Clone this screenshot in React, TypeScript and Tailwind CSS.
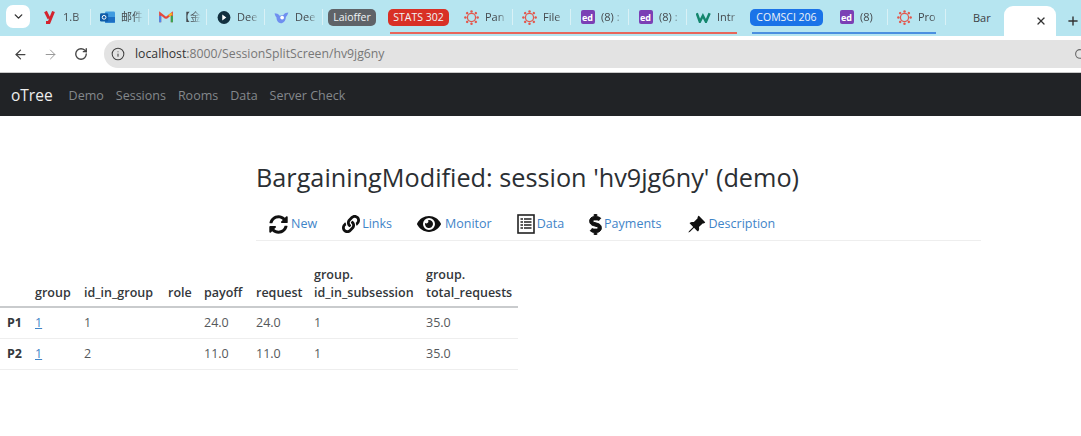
import { ArrowLeft, ArrowRight, ChevronDown, Info, Plus, RotateCw, Search, X } from 'lucide-react'
import type { ReactNode } from 'react'
import { BsPinAngleFill } from 'react-icons/bs'
import { FaDollarSign, FaEye, FaLink, FaSyncAlt } from 'react-icons/fa'

function CanvasIcon() {
  const dots = [0, 45, 90, 135, 180, 225, 270, 315]
  return (
    <svg width="15" height="15" viewBox="0 0 24 24">
      <circle cx="12" cy="12" r="6.5" fill="none" stroke="#e2574c" strokeWidth="2" />
      {dots.map((a) => (
        <circle key={a} cx="12" cy="2.200" r="2" fill="#e2574c" transform={`rotate(${a} 12 12)`} />
      ))}
    </svg>
  )
}

function EdIcon() {
  return (
    <div className="flex h-[14px] w-[14px] items-center justify-center rounded-[2px] bg-[#7b3fb5] text-[9px] font-bold leading-none text-white">
      ed
    </div>
  )
}

function YIcon() {
  return (
    <svg width="11" height="14" viewBox="0 0 22 28">
      <path d="M3 3l7 14M19 3l-9 22H4" fill="none" stroke="#d3232e" strokeWidth="6" />
    </svg>
  )
}

function OutlookIcon() {
  return (
    <svg width="15" height="14" viewBox="0 0 24 22">
      <rect x="8" y="2" width="16" height="18" rx="2" fill="#3f9be0" />
      <rect x="8" y="11" width="16" height="9" fill="#1c6fc4" />
      <rect x="0" y="5" width="13" height="13" rx="2" fill="#0f5ca8" />
      <circle cx="6.500" cy="11.500" r="3" fill="none" stroke="#fff" strokeWidth="1.600" />
    </svg>
  )
}

function GmailIcon() {
  return (
    <svg width="14" height="12" viewBox="0 0 24 20">
      <path d="M2 19V4l10 8" fill="none" stroke="#e5483b" strokeWidth="3.600" />
      <path d="M22 19V4L12 12" fill="none" stroke="#e5483b" strokeWidth="3.600" />
      <path d="M2 19V8" stroke="#4a88ee" strokeWidth="3.600" />
      <path d="M22 19V8" stroke="#33a853" strokeWidth="3.600" />
      <path d="M22 4l-5 4" stroke="#f7bc1c" strokeWidth="3.600" />
    </svg>
  )
}

function DarkHexIcon() {
  return (
    <svg width="14" height="15" viewBox="0 0 24 24">
      <circle cx="12" cy="12" r="11" fill="#12303f" />
      <path d="M9 7l7 5-7 5z" fill="#fff" />
    </svg>
  )
}

function WhaleIcon() {
  return (
    <svg width="15" height="13" viewBox="0 0 24 20">
      <path d="M1 3c3 0 6 1 8 4l6-1c2-3 5-4 8-4-1 3-2 5-4 7 0 6-4 10-8 10S4 15 4 10C3 8 1 6 1 3z" fill="#6f8ff0" />
      <circle cx="13" cy="10" r="3" fill="#fff" />
    </svg>
  )
}

function WIcon() {
  return (
    <svg width="15" height="11" viewBox="0 0 24 18">
      <path d="M1 2l5 14 5-10 5 10 6-14" fill="none" stroke="#14866d" strokeWidth="4" />
    </svg>
  )
}

function ListIcon() {
  return (
    <svg width="18" height="20" viewBox="0 0 18 20" fill="none" stroke="#222">
      <rect x="1" y="1" width="16" height="18" strokeWidth="1.600" />
      <path d="M3.500 5h11M3.500 8h11M3.500 11h11M3.500 14h11" strokeWidth="1.600" />
      <path d="M6.500 4v12" stroke="#fff" strokeWidth="1" />
    </svg>
  )
}

function Tab({ icon, label, last }: { icon?: ReactNode; label: string; last?: boolean }) {
  return (
    <div className="flex h-[24px] w-[58px] shrink-0 items-center">
      <div className="flex h-[16px] w-[57px] items-center gap-[6px] overflow-hidden pl-[9px]">
        <div className="flex w-[15px] shrink-0 justify-center">{icon}</div>
        <span className="w-[22px] shrink-0 overflow-hidden whitespace-nowrap text-[11px] text-[#45494d] [mask-image:linear-gradient(to_right,black_60%,transparent)]">
          {label}
        </span>
      </div>
      {!last && <div className="h-[16px] w-px shrink-0 bg-[#d9f1f6]" />}
    </div>
  )
}

function Pill({ label, color, width }: { label: string; color: string; width: string }) {
  return (
    <div className={`flex h-[17px] shrink-0 items-center justify-center rounded-[5px] text-[10.5px] text-[#f0f4f6] ${color} ${width}`}>
      {label}
    </div>
  )
}

function TabStrip() {
  return (
    <div className="flex h-[36px] items-start bg-[#b6e5f0] pt-[5px]">
      <div className="ml-[6px] flex h-[23px] w-[24px] shrink-0 items-center justify-center rounded-[7px] bg-white">
        <ChevronDown size={13} strokeWidth={2.6} className="text-[#333]" />
      </div>
      <div className="ml-[3px] flex">
        <Tab icon={<YIcon />} label="1.B" />
        <Tab icon={<OutlookIcon />} label="邮件" />
        <Tab icon={<GmailIcon />} label="【金" />
        <Tab icon={<DarkHexIcon />} label="Dee" />
        <Tab icon={<WhaleIcon />} label="Dee" />
      </div>
      <div className="mt-[4px] shrink-0 pl-[5px]">
        <Pill label="Laioffer" color="bg-[#5f6368]" width="w-[48px]" />
      </div>
      <div className="ml-[12px] flex h-[29px] shrink-0 items-start">
        <div className="flex h-[29px] w-[350px] flex-col">
          <div className="flex h-[27px] items-start">
            <div className="mt-[4px]">
              <Pill label="STATS 302" color="bg-[#d93025]" width="w-[61px]" />
            </div>
            <div className="ml-[6px] flex">
              <Tab icon={<CanvasIcon />} label="Pan" />
              <Tab icon={<CanvasIcon />} label="File" />
              <Tab icon={<EdIcon />} label="(8) :" />
              <Tab icon={<EdIcon />} label="(8) :" />
              <Tab icon={<WIcon />} label="Intr" last />
            </div>
          </div>
          <div className="ml-[2px] h-[2px] w-[347px] bg-[#e8655a]" />
        </div>
      </div>
      <div className="ml-[12px] flex h-[29px] w-[187px] shrink-0 flex-col">
        <div className="flex h-[27px] items-start">
          <div className="mt-[4px]">
            <Pill label="COMSCI 206" color="bg-[#1a73e8]" width="w-[73px]" />
          </div>
          <div className="ml-[7px] flex">
            <Tab icon={<EdIcon />} label="(8)" />
            <Tab icon={<CanvasIcon />} label="Pro" />
          </div>
        </div>
        <div className="ml-[2px] h-[2px] w-[184px] bg-[#4b8fe0]" />
      </div>
      <div className="ml-[36px] mt-[4px] w-[20px] shrink-0 text-[11px] leading-[17px] text-[#3c4043]">Bar</div>
      <div className="ml-[11px] mt-[1px] flex h-[30px] w-[52px] shrink-0 items-center justify-end self-start rounded-t-[9px] bg-white pr-[9px]">
        <X size={12} strokeWidth={2.6} className="text-[#333]" />
      </div>
      <Plus size={14} strokeWidth={2.4} className="ml-[10px] mt-[9px] shrink-0 text-[#333]" />
    </div>
  )
}

function Toolbar() {
  return (
    <div className="flex h-[37px] items-center border-b border-[#c9c9c9] bg-white pl-[13px]">
      <ArrowLeft size={15} strokeWidth={2} className="text-[#444]" />
      <ArrowRight size={15} strokeWidth={1.6} className="ml-[15px] text-[#999]" />
      <RotateCw size={14} strokeWidth={2.3} className="ml-[16px] text-[#444]" />
      <div className="ml-[16px] flex h-[28px] min-w-0 flex-1 items-center overflow-hidden rounded-l-full bg-[#e3e3e3] pl-[6px]">
        <Info size={14} strokeWidth={1.8} className="ml-[1px] shrink-0 text-[#444]" />
        <div className="ml-[10px] text-[12.25px] text-[#777]">
          <span className="text-[#333]">localhost</span>:8000/SessionSplitScreen/hv9jg6ny
        </div>
        <Search size={13} className="ml-auto mr-[-6px] shrink-0 text-[#666]" />
      </div>
    </div>
  )
}

function NavBar() {
  return (
    <nav className="flex h-[43px] items-center bg-[#212326] pl-[11px] pt-[3px]">
      <span className="text-[15.5px] text-[#eeeeee]">oTree</span>
      <div className="ml-[16px] flex gap-[12px] text-[12.5px] text-[#84888c]">
        <span>Demo</span>
        <span>Sessions</span>
        <span>Rooms</span>
        <span>Data</span>
        <span>Server Check</span>
      </div>
    </nav>
  )
}

const ACTIONS = [
  { label: 'New', icon: <FaSyncAlt size={19} />, gap: 'gap-[3px]' },
  { label: 'Links', icon: <FaLink size={18} />, gap: 'gap-[2px]' },
  { label: 'Monitor', icon: <FaEye size={24} />, gap: 'gap-[4px]' },
  { label: 'Data', icon: <ListIcon />, gap: 'gap-[2px]' },
  { label: 'Payments', icon: <FaDollarSign size={21} stroke="currentColor" strokeWidth={24} className="-mx-[4px]" />, gap: 'gap-[2px]' },
  { label: 'Description', icon: <BsPinAngleFill size={19} />, gap: 'gap-[3px]' },
]

function Header() {
  return (
    <div className="ml-[256px] mt-[43px] w-[725px]">
      <h1 className="text-[25.25px] leading-[36px] text-[#2b2f33]">BargainingModified: session 'hv9jg6ny' (demo)</h1>
      <div className="mt-[14px] flex h-[32px] items-start gap-[25px] border-b border-[#eeeeee] pl-[13px] pt-[3px]">
        {ACTIONS.map((a) => (
          <div key={a.label} className={`flex h-[24px] items-center text-[12.5px] text-[#3f84c8] ${a.gap}`}>
            <span className="text-[#111]">{a.icon}</span>
            <span>{a.label}</span>
          </div>
        ))}
      </div>
    </div>
  )
}

const HEAD = ['', 'group', 'id_in_group', 'role', 'payoff', 'request', 'group.\nid_in_subsession', 'group.\ntotal_requests']
const ROWS = [
  ['P1', '1', '1', '', '24.0', '24.0', '1', '35.0'],
  ['P2', '1', '2', '', '11.0', '11.0', '1', '35.0'],
]

function DataTable() {
  return (
    <table className="mt-[25px] w-[518px] table-fixed border-collapse text-[12.5px] text-[#55585b]">
      <colgroup>
        <col className="w-[30px]" />
        <col className="w-[49px]" />
        <col className="w-[84px]" />
        <col className="w-[36px]" />
        <col className="w-[52px]" />
        <col className="w-[58px]" />
        <col className="w-[112px]" />
        <col className="w-[97px]" />
      </colgroup>
      <thead>
        <tr className="border-b-2 border-[#c9cbcd]">
          {HEAD.map((h, i) => (
            <th key={i} className="whitespace-pre pb-[4px] pl-[5px] text-left align-bottom text-[12.5px] font-semibold leading-[18px] text-[#33373b]">
              {h}
            </th>
          ))}
        </tr>
      </thead>
      <tbody>
        {ROWS.map((row) => (
          <tr key={row[0]} className="h-[31px] border-b border-[#eeeeee]">
            {row.map((c, i) => (
              <td key={i} className={i === 0 ? 'pl-[7px] pt-[2px] font-bold text-[#33373b]' : 'pl-[5px] pt-[2px]'}>
                {i === 1 ? <span className="text-[#3f84c8] underline">{c}</span> : c}
              </td>
            ))}
          </tr>
        ))}
      </tbody>
    </table>
  )
}

export default function App() {
  return (
    <div className="h-[436px] w-[1081px] overflow-hidden bg-white font-['Open_Sans','Noto_Sans_CJK_SC',sans-serif]">
      <TabStrip />
      <Toolbar />
      <NavBar />
      <Header />
      <DataTable />
    </div>
  )
}
